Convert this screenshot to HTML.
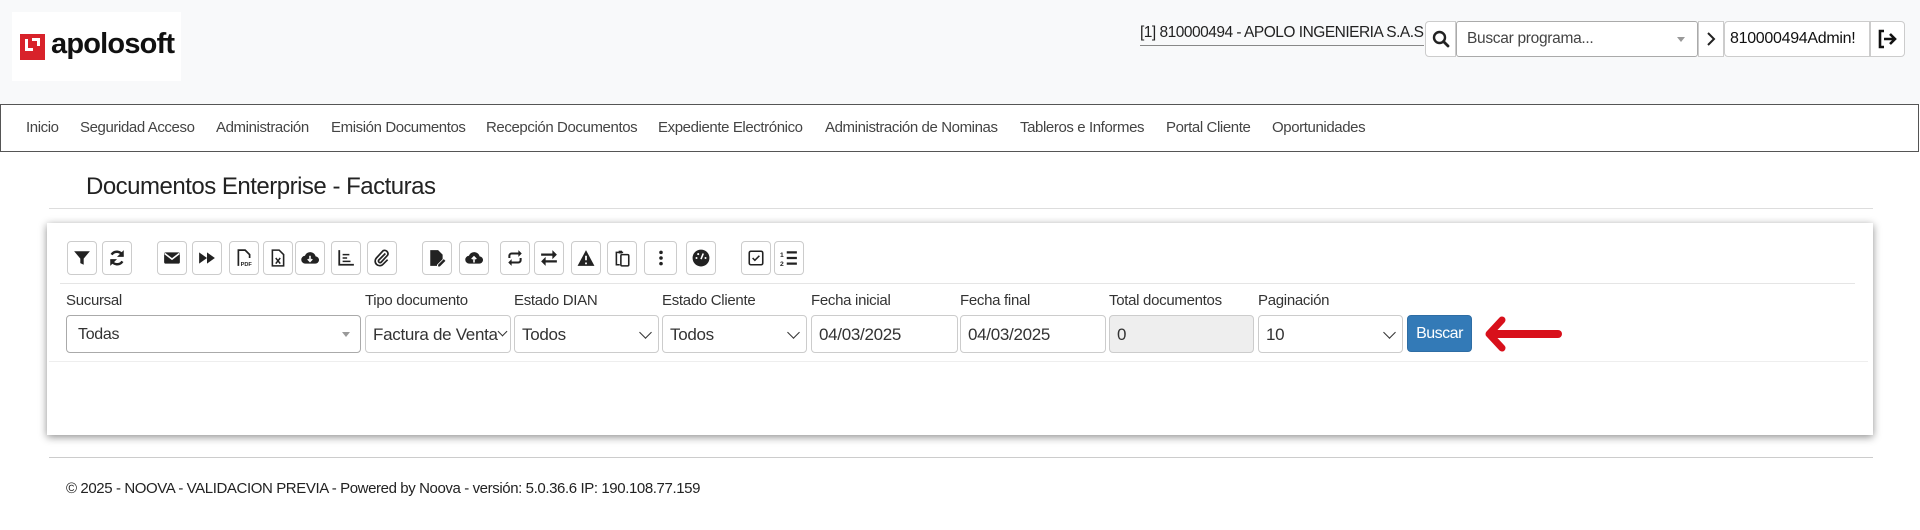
<!DOCTYPE html>
<html><head><meta charset="utf-8"><style>
*{box-sizing:border-box;margin:0;padding:0}
body{width:1920px;height:530px;background:#fff;font-family:"Liberation Sans",Arial,sans-serif;color:#333;position:relative;overflow:hidden}
.abs{position:absolute}
.hdr{left:0;top:0;width:1920px;height:104px;background:#f8f9fa}
.nav{left:0;top:104px;width:1919px;height:48px;border:1px solid #555;background:#fff}
.nav span{position:absolute;top:14px;font-size:15px;color:#444;letter-spacing:-0.4px;white-space:nowrap}
.btn{position:absolute;top:241px;width:30px;height:34px;border:1px solid #ccc;border-radius:4px;background:#fff;display:flex;align-items:center;justify-content:center}
.btn svg{width:18px;height:18px}
.lbl{position:absolute;top:292px;font-size:15px;color:#333;letter-spacing:-0.3px;white-space:nowrap}
.inp{position:absolute;top:315px;height:38px;border:1px solid #ccc;border-radius:4px;background:#fff;font-size:17px;color:#333;padding:9px 7px;letter-spacing:-0.3px;white-space:nowrap;overflow:hidden}
.chev{position:absolute;right:8px;top:12px;width:9px;height:9px;border-right:1.5px solid #333;border-bottom:1.5px solid #333;transform:rotate(45deg)}
</style></head><body>
<div class="abs hdr"></div>
<div class="abs" style="left:12px;top:12px;width:169px;height:69px;background:#fff"></div>
<div class="abs" style="left:20px;top:34px;width:25px;height:26px;background:#d8222a"></div>
<div class="abs" style="left:25px;top:39px;width:8px;height:12px;border-left:3px solid #fff;border-bottom:3px solid #fff"></div>
<div class="abs" style="left:32px;top:38px;width:8px;height:8px;border-right:3px solid #fff;border-top:3px solid #fff"></div>
<div class="abs" style="left:51px;top:28px;font-size:29px;font-weight:bold;color:#111;letter-spacing:-0.8px">apolosoft</div>

<div class="abs" style="left:1140px;top:24px;font-size:15.5px;color:#222;letter-spacing:-0.5px;border-bottom:1px solid #888;white-space:nowrap;width:284px;height:22px">[1] 810000494 - APOLO INGENIERIA S.A.S</div>
<div class="abs" style="left:1425px;top:21px;width:31px;height:36px;border:1px solid #ccc;border-radius:4px 0 0 4px;background:#fff"></div>
<svg class="abs" style="left:1432px;top:30px" width="18" height="18" viewBox="0 0 18 18"><circle cx="7.5" cy="7.5" r="5.5" fill="none" stroke="#222" stroke-width="2.4"/><path d="M11.5 11.5L16 16" stroke="#222" stroke-width="2.8" stroke-linecap="round"/></svg>
<div class="abs" style="left:1456px;top:21px;width:242px;height:36px;border:1px solid #aaa;border-radius:3px;background:#fff;font-size:15.5px;color:#444;padding:8px 10px;letter-spacing:-0.3px">Buscar programa...</div>
<div class="abs" style="left:1677px;top:37px;width:0;height:0;border-left:4px solid transparent;border-right:4px solid transparent;border-top:5px solid #999"></div>
<div class="abs" style="left:1698px;top:21px;width:26px;height:36px;border:1px solid #ccc;background:#fff"></div>
<svg class="abs" style="left:1705px;top:31px" width="12" height="16" viewBox="0 0 12 16"><path d="M3 2l6 6-6 6" fill="none" stroke="#222" stroke-width="2"/></svg>
<div class="abs" style="left:1724px;top:21px;width:146px;height:36px;border:1px solid #ccc;border-radius:4px 0 0 4px;background:#fff;font-size:16px;color:#111;padding:8px 5px;letter-spacing:-0.3px">810000494Admin!</div>
<div class="abs" style="left:1870px;top:21px;width:35px;height:36px;border:1px solid #ccc;border-radius:0 4px 4px 0;background:#fff"></div>
<svg class="abs" style="left:1876px;top:28px" width="22" height="22" viewBox="0 0 22 22"><path d="M8 3H4v16h4" fill="none" stroke="#111" stroke-width="2.6"/><path d="M8 11h11M14 6l5 5-5 5" fill="none" stroke="#111" stroke-width="2.6"/></svg>

<div class="abs nav">
<span style="left:25px">Inicio</span><span style="left:79px">Seguridad Acceso</span><span style="left:215px">Administración</span><span style="left:330px">Emisión Documentos</span><span style="left:485px">Recepción Documentos</span><span style="left:657px">Expediente Electrónico</span><span style="left:824px">Administración de Nominas</span><span style="left:1019px">Tableros e Informes</span><span style="left:1165px">Portal Cliente</span><span style="left:1271px">Oportunidades</span>
</div>

<div class="abs" style="left:86px;top:173px;font-size:24px;color:#222;letter-spacing:-0.5px">Documentos Enterprise - Facturas</div>
<div class="abs" style="left:49px;top:208px;width:1824px;height:1px;background:#ddd"></div>

<div class="abs" style="left:47px;top:223px;width:1826px;height:212px;background:#fff;box-shadow:0 2px 8px rgba(0,0,0,.45)"></div>

<div class="btn" style="left:67px"><svg viewBox="0 0 16 16"><path d="M1 2h14l-5.5 6.5V14l-3-1.5V8.5z" fill="#222"/></svg></div>
<div class="btn" style="left:102px"><svg viewBox="0 0 16 16"><path d="M13 6A5.5 5.5 0 0 0 3.2 5M3 10a5.5 5.5 0 0 0 9.8 1" fill="none" stroke="#222" stroke-width="2.2"/><path d="M14 1v6H8zM2 15V9h6z" fill="#222"/></svg></div>
<div class="btn" style="left:157px"><svg viewBox="0 0 16 16"><rect x="1" y="3" width="14" height="10" rx="1.5" fill="#222"/><path d="M1.5 4l6.5 5 6.5-5" fill="none" stroke="#fff" stroke-width="1.4"/></svg></div>
<div class="btn" style="left:192px"><svg viewBox="0 0 16 16"><path d="M1 3l7 5-7 5zM8 3l7 5-7 5z" fill="#222"/></svg></div>
<div class="btn" style="left:229px"><svg viewBox="0 0 16 16"><path d="M3 15V1h6l4 4v3" fill="none" stroke="#222" stroke-width="1.5"/><text x="5" y="15" font-size="5" font-family="Liberation Sans" font-weight="bold" fill="#222">PDF</text></svg></div>
<div class="btn" style="left:263px"><svg viewBox="0 0 16 16"><path d="M3 15V1h6l4 4v10z" fill="none" stroke="#222" stroke-width="1.4"/><path d="M6 8l4 5M10 8l-4 5" stroke="#222" stroke-width="1.3"/></svg></div>
<div class="btn" style="left:295px"><svg viewBox="0 0 16 16"><path d="M4 13a3.5 3.5 0 0 1-.5-7A5 5 0 0 1 13 6.5 3.2 3.2 0 0 1 12.5 13z" fill="#222"/><path d="M8 6v5M6 9l2 2 2-2" stroke="#fff" stroke-width="1.4" fill="none"/></svg></div>
<div class="btn" style="left:331px"><svg viewBox="0 0 16 16"><path d="M2 1v13h13" fill="none" stroke="#222" stroke-width="1.6"/><path d="M5 5h6M5 8h4M5 11h7" stroke="#222" stroke-width="1.4"/></svg></div>
<div class="btn" style="left:367px"><svg viewBox="0 0 16 16"><path d="M11 4L5 10a1.5 1.5 0 0 0 2 2l6-6.5a3 3 0 0 0-4-4L3 8a4 4 0 0 0 6 5.5l4-4" fill="none" stroke="#222" stroke-width="1.5"/></svg></div>
<div class="btn" style="left:422px"><svg viewBox="0 0 16 16"><path d="M2 1h7l4 4v4l-5 5v1H2z" fill="#222"/><path d="M9 14l5-5 1.5 1.5-5 5H9z" fill="#222"/></svg></div>
<div class="btn" style="left:459px"><svg viewBox="0 0 16 16"><path d="M4 13a3.5 3.5 0 0 1-.5-7A5 5 0 0 1 13 6.5 3.2 3.2 0 0 1 12.5 13z" fill="#222"/><path d="M8 12V7M6 9l2-2 2 2" stroke="#fff" stroke-width="1.4" fill="none"/></svg></div>
<div class="btn" style="left:500px"><svg viewBox="0 0 16 16"><path d="M3 8V6a2 2 0 0 1 2-2h8M13 8v2a2 2 0 0 1-2 2H3" fill="none" stroke="#222" stroke-width="1.8"/><path d="M11 1l3 3-3 3zM5 9l-3 3 3 3z" fill="#222"/></svg></div>
<div class="btn" style="left:534px"><svg viewBox="0 0 16 16"><path d="M1 5h11M4 11h11" stroke="#222" stroke-width="2"/><path d="M11 1l4 4-4 4zM5 7l-4 4 4 4z" fill="#222"/></svg></div>
<div class="btn" style="left:571px"><svg viewBox="0 0 16 16"><path d="M8 1l7.5 14H.5z" fill="#222"/><path d="M8 6v4M8 12v1.5" stroke="#fff" stroke-width="1.6"/></svg></div>
<div class="btn" style="left:607px"><svg viewBox="0 0 16 16"><path d="M9 3H3v11h3" fill="none" stroke="#222" stroke-width="1.4"/><rect x="7" y="5" width="7" height="10" rx="1" fill="none" stroke="#222" stroke-width="1.4"/><rect x="5" y="1.5" width="3" height="2.5" fill="#222"/></svg></div>
<div class="btn" style="left:644px;width:33px"><svg viewBox="0 0 16 16"><circle cx="8" cy="3" r="1.6" fill="#222"/><circle cx="8" cy="8" r="1.6" fill="#222"/><circle cx="8" cy="13" r="1.6" fill="#222"/></svg></div>
<div class="btn" style="left:686px"><svg viewBox="0 0 16 16"><circle cx="8" cy="8" r="7.5" fill="#222"/><path d="M8 9l2-5" stroke="#fff" stroke-width="1.4"/><circle cx="4" cy="8" r=".9" fill="#fff"/><circle cx="12" cy="8" r=".9" fill="#fff"/><circle cx="5.5" cy="4.5" r=".9" fill="#fff"/></svg></div>
<div class="btn" style="left:741px"><svg viewBox="0 0 16 16"><rect x="2" y="2" width="12" height="12" rx="1.5" fill="none" stroke="#222" stroke-width="1.4"/><path d="M5 8l2 2 4-4" fill="none" stroke="#222" stroke-width="1.4"/></svg></div>
<div class="btn" style="left:774px"><svg viewBox="0 0 16 16"><path d="M6 3h9M6 8h9M6 13h9" stroke="#222" stroke-width="2"/><text x="0" y="7" font-size="6" font-family="Liberation Sans" font-weight="bold" fill="#222">1</text><text x="0" y="15" font-size="6" font-family="Liberation Sans" font-weight="bold" fill="#222">2</text></svg></div>

<div class="abs" style="left:60px;top:283px;width:1795px;height:1px;background:#e5e5e5"></div>

<div class="lbl" style="left:66px">Sucursal</div>
<div class="lbl" style="left:365px">Tipo documento</div>
<div class="lbl" style="left:514px">Estado DIAN</div>
<div class="lbl" style="left:662px">Estado Cliente</div>
<div class="lbl" style="left:811px">Fecha inicial</div>
<div class="lbl" style="left:960px">Fecha final</div>
<div class="lbl" style="left:1109px">Total documentos</div>
<div class="lbl" style="left:1258px">Paginación</div>

<div class="inp" style="left:66px;width:295px;border-color:#aaa;font-size:16px;padding:10px 11px">Todas<div class="abs" style="right:10px;top:16px;border-left:4px solid transparent;border-right:4px solid transparent;border-top:5px solid #999"></div></div>
<div class="inp" style="left:365px;width:146px">Factura de Venta<div class="chev" style="right:4px;width:7px;height:7px"></div></div>
<div class="inp" style="left:514px;width:145px">Todos<div class="chev"></div></div>
<div class="inp" style="left:662px;width:145px">Todos<div class="chev"></div></div>
<div class="inp" style="left:811px;width:147px">04/03/2025</div>
<div class="inp" style="left:960px;width:146px">04/03/2025</div>
<div class="inp" style="left:1109px;width:145px;background:#eee">0</div>
<div class="inp" style="left:1258px;width:145px">10<div class="chev"></div></div>
<div class="abs" style="left:1407px;top:315px;width:65px;height:37px;background:#337ab7;border:1px solid #2e6da4;border-radius:4px;color:#fff;font-size:16px;text-align:center;line-height:35px;letter-spacing:-0.5px">Buscar</div>
<svg class="abs" style="left:1484px;top:315px" width="80" height="38" viewBox="0 0 80 38"><path d="M74 19H12" stroke="#d8101b" stroke-width="8" stroke-linecap="round"/><path d="M18 5L5 19l13 14" fill="none" stroke="#d8101b" stroke-width="7" stroke-linecap="round" stroke-linejoin="round"/></svg>

<div class="abs" style="left:49px;top:361px;width:1819px;height:1px;background:#eee"></div>

<div class="abs" style="left:49px;top:457px;width:1824px;height:1px;background:#ccc"></div>
<div class="abs" style="left:66px;top:480px;font-size:15px;color:#222;letter-spacing:-0.4px;white-space:nowrap">© 2025 - NOOVA - VALIDACION PREVIA - Powered by Noova - versión: 5.0.36.6 IP: 190.108.77.159</div>
</body></html>
